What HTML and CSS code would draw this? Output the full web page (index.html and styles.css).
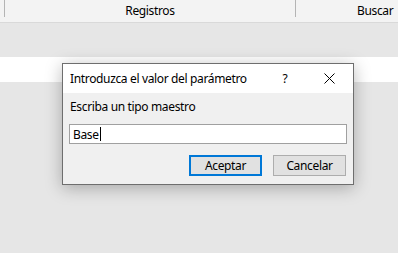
FILE: index.html
```html
<!DOCTYPE html>
<html>
<head>
<meta charset="utf-8">
<title>Introduzca el valor del parámetro</title>
<link rel="stylesheet" href="styles.css">
</head>
<body>

<div class="app">
	<div class="toolbar">
		<div class="tab tab-main">Registros</div>
		<div class="tab tab-search">Buscar</div>
	</div>
	<div class="workspace">
		<div class="row"></div>
	</div>
</div>

<div class="dialog">
	<div class="dialog-title">
		<span class="title-text">Introduzca el valor del parámetro</span>
		<span class="title-help">?</span>
		<span class="title-close">
			<svg width="11" height="11" viewBox="0 0 11 11"><path d="M0.5 0.5 L10.5 10.5 M10.5 0.5 L0.5 10.5" stroke="#000" stroke-width="1" fill="none"/></svg>
		</span>
	</div>
	<div class="dialog-body">
		<div class="prompt">Escriba un tipo maestro</div>
		<div class="field"><span class="field-text">Base</span><span class="caret"></span></div>
		<div class="buttons">
			<button class="btn btn-default">Aceptar</button>
			<button class="btn">Cancelar</button>
		</div>
	</div>
</div>

</body>
</html>
```

FILE: styles.css
```css
* {
	box-sizing: border-box;
}

body {
	margin: 0;
	font-family: "Noto Sans", "Open Sans", sans-serif;
	font-size: 12px;
	letter-spacing: -0.35px;
	color: #000;
	background: #e6e6e6;
	overflow: hidden;
}

.app {
	height: 253px;
	display: flex;
	flex-direction: column;
}

.toolbar {
	height: 23px;
	display: flex;
	background: #f3f3f3;
	border-bottom: 1px solid #d9d9d9;
}

.tab {
	height: 17px;
	line-height: 22px;
	white-space: nowrap;
}

.tab-main {
	margin-left: 4px;
	width: 292px;
	border-left: 1px solid #b4b4b4;
	border-right: 1px solid #b4b4b4;
	text-align: center;
}

.tab-search {
	padding-left: 61px;
}

.workspace {
	flex: 1;
	padding-top: 34px;
}

.row {
	height: 25px;
	background: #fff;
}

.dialog {
	position: absolute;
	left: 62px;
	top: 63px;
	width: 292px;
	height: 122px;
	border: 1px solid #6e6e6e;
	background: #f0f0f0;
	box-shadow: 0 3px 16px rgba(0, 0, 0, 0.28);
	display: flex;
	flex-direction: column;
}

.dialog-title {
	height: 29px;
	background: #fff;
	display: flex;
	align-items: center;
	padding-left: 7px;
}

.title-text {
	flex: 1;
}

.title-help {
	width: 12px;
	text-align: center;
	margin-right: 33px;
}

.title-close {
	display: flex;
	margin-right: 18px;
}

.dialog-body {
	flex: 1;
	padding: 6px 6px 0 6px;
	display: flex;
	flex-direction: column;
}

.prompt {
	line-height: 16px;
	padding-left: 1px;
}

.field {
	margin-top: 9px;
	height: 20px;
	background: #fff;
	border: 1px solid #a0a0a0;
	display: flex;
	align-items: center;
	padding-left: 3px;
}

.caret {
	width: 1px;
	height: 14px;
	background: #000;
	margin-left: 1px;
}

.buttons {
	margin-top: 11px;
	display: flex;
	justify-content: flex-end;
	gap: 11px;
	padding-right: 1px;
}

.btn {
	width: 73px;
	height: 21px;
	padding: 0;
	font-family: inherit;
	font-size: 12px;
	letter-spacing: -0.35px;
	color: #000;
	background: #e1e1e1;
	border: 1px solid #adadad;
}

.btn-default {
	border: 2px solid #0078d7;
}
```
